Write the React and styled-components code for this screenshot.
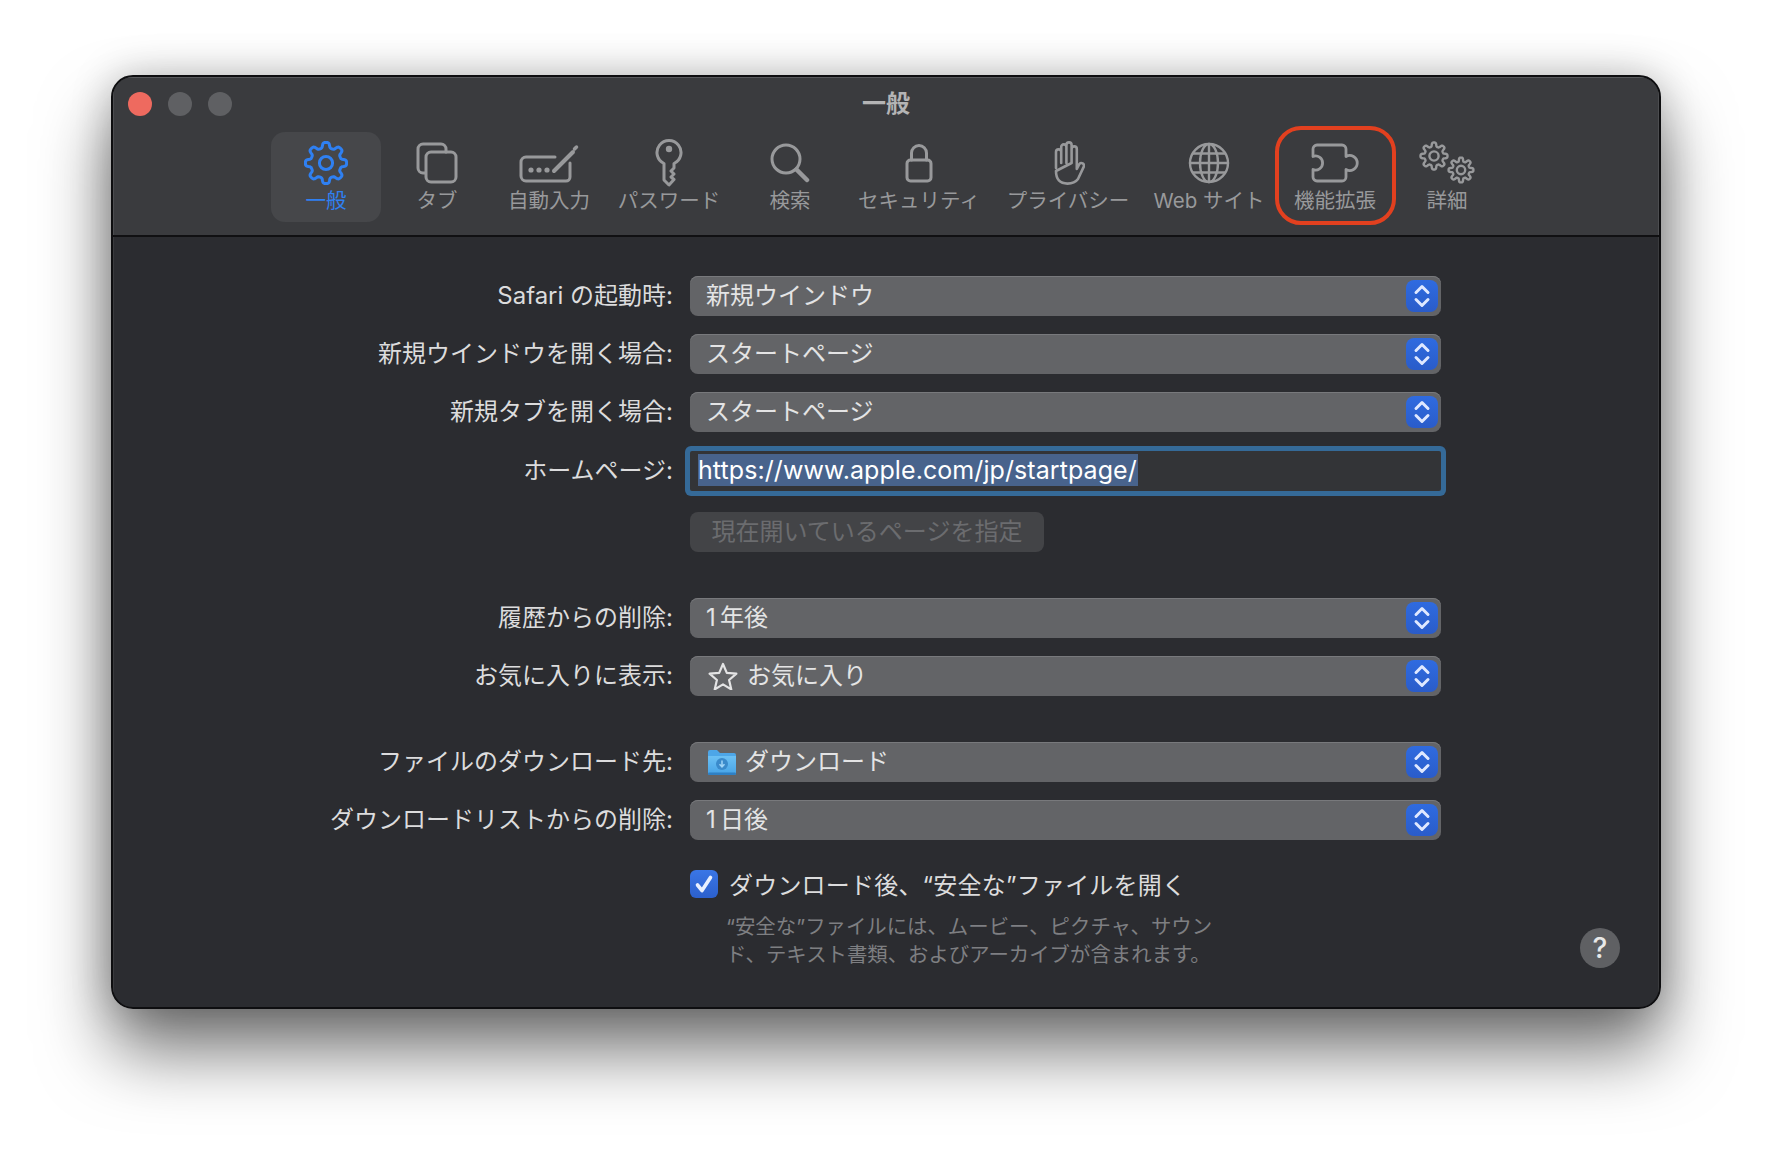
import React from 'react';
import styled, { createGlobalStyle } from 'styled-components';

const GlobalStyle = createGlobalStyle`
	html, body {
		margin: 0;
		padding: 0;
		background: #fff;
	}
	body {
		font-family: Inter, "Noto Sans CJK JP", sans-serif;
	}
`;

const Page = styled.div`
	width: 1772px;
	height: 1156px;
	padding-top: 75px;
	box-sizing: border-box;
	overflow: hidden;
	background: #fff;
`;

const Shadow = styled.div`
	width: 1550px;
	height: 934px;
	margin: 0 auto;
	border-radius: 22px;
	box-shadow: 0 42px 70px rgba(0, 0, 0, 0.55), 0 0 40px rgba(0, 0, 0, 0.22);
`;

const Window = styled.div`
	width: 100%;
	height: 100%;
	box-sizing: border-box;
	display: flex;
	flex-direction: column;
	border: 2px solid #0e0e10;
	border-radius: 22px;
	overflow: hidden;
	background: #2b2c30;
`;

const Toolbar = styled.header`
	height: 160px;
	flex-shrink: 0;
	box-sizing: border-box;
	background: #3a3b3e;
	border-bottom: 2px solid #101012;
	box-shadow: inset 0 1px 0 #58595c, inset 1px 0 0 #4c4d50, inset -1px 0 0 #4c4d50;
`;

const TitleRow = styled.div`
	height: 55px;
	padding: 0 15px;
	display: grid;
	grid-template-columns: 1fr auto 1fr;
	align-items: center;
`;

const Lights = styled.div`
	display: flex;
	gap: 16px;
	padding-bottom: 2px;
`;

const Light = styled.span`
	width: 24px;
	height: 24px;
	border-radius: 50%;
	background: ${({ $color }) => $color};
`;

const Title = styled.div`
	padding-bottom: 7px;
	font-size: 24px;
	font-weight: 700;
	color: #b4b4b5;
`;

const Tabs = styled.nav`
	display: flex;
	padding-left: 158px;
`;

const TabItem = styled.div`
	position: relative;
	width: ${({ $width }) => $width}px;
	height: 90px;
	box-sizing: border-box;
	padding-top: 6px;
	display: flex;
	flex-direction: column;
	align-items: center;
	border-radius: 14px;
	background: ${({ $active }) => ($active ? '#46474a' : 'transparent')};
	color: ${({ $active }) => ($active ? '#2f80f2' : '#98999b')};
`;

const IconSlot = styled.div`
	height: 50px;
	display: flex;
	align-items: center;
	justify-content: center;
`;

const TabLabel = styled.span`
	margin-top: 1px;
	font-size: 20.5px;
	line-height: 24px;
	white-space: nowrap;
`;

const Ring = styled.span`
	position: absolute;
	top: -6px;
	bottom: -3px;
	left: 2px;
	right: 1px;
	border: 4px solid #e2401f;
	border-radius: 26px;
`;

const Body = styled.main`
	flex: 1;
	box-sizing: border-box;
	padding: 39px 0 39px;
	display: flex;
	flex-direction: column;
	box-shadow: inset 0 -1px 0 #424346, inset 1px 0 0 #3a3b3e, inset -1px 0 0 #3a3b3e;
`;

const Row = styled.div`
	display: grid;
	grid-template-columns: 560px 751px;
	column-gap: 17px;
	align-items: center;
	margin-top: ${({ $top }) => $top || 0}px;
`;

const Label = styled.label`
	font-size: 24px;
	line-height: 40px;
	text-align: right;
	color: #dcdcdd;
	white-space: nowrap;
`;

const Select = styled.div`
	height: 40px;
	box-sizing: border-box;
	padding: 0 3px 0 16px;
	display: flex;
	align-items: center;
	gap: 9px;
	border-radius: 8px;
	background: #636467;
	box-shadow: inset 0 1px 0 #78797c;
	font-size: 24px;
	color: #e4e4e5;
`;

const SelectIcon = styled.span`
	display: flex;
	margin-left: 2px;
`;

const SelectText = styled.span`
	flex: 1;
	padding-bottom: 6px;
	white-space: nowrap;
`;

const Stepper = styled.span`
	width: 32px;
	height: 32px;
	display: flex;
	align-items: center;
	justify-content: center;
	border-radius: 8px;
	background: linear-gradient(#2f6be0, #2a5cc9);
`;

const Field = styled.div`
	height: 40px;
	box-sizing: border-box;
	padding: 3px 8px 5px;
	display: flex;
	align-items: center;
	background: #333437;
	box-shadow: 0 0 0 5px #356a98;
	border-radius: 2px;
`;

const Selection = styled.span`
	height: 32px;
	line-height: 33px;
	padding-right: 1px;
	font-size: 25px;
	letter-spacing: 0.08px;
	background: #48638c;
	color: #fff;
	white-space: nowrap;
`;

const GhostButton = styled.div`
	width: 354px;
	height: 40px;
	box-sizing: border-box;
	padding-bottom: 6px;
	display: flex;
	align-items: center;
	justify-content: center;
	border-radius: 8px;
	background: #434447;
	color: #6b6c6f;
	font-size: 24px;
`;

const Footer = styled.div`
	margin-top: 30px;
	display: grid;
	grid-template-columns: 560px 751px 1fr;
	column-gap: 17px;
`;

const CheckRow = styled.div`
	display: flex;
	align-items: center;
	gap: 11px;
	height: 28px;
	font-size: 24px;
	letter-spacing: 0.2px;
	color: #dcdcdd;
	white-space: nowrap;
`;

const CheckText = styled.span`
	padding-bottom: 2px;
`;

const CheckBox = styled.span`
	width: 28px;
	height: 28px;
	display: flex;
	align-items: center;
	justify-content: center;
	border-radius: 6px;
	background: linear-gradient(#3a76e6, #2c60cc);
`;

const Note = styled.p`
	width: 500px;
	margin: 15px 0 0 36px;
	font-size: 20.4px;
	line-height: 28px;
	color: #7e7f82;
`;

const Help = styled.div`
	grid-column: 3;
	align-self: end;
	justify-self: end;
	margin: 0 39px 1px 0;
	width: 40px;
	height: 40px;
	display: flex;
	align-items: center;
	justify-content: center;
	border-radius: 50%;
	background: #5f6063;
	color: #e8e8e8;
	font-size: 28px;
	font-weight: 500;
`;

// toolbar icons, 1 unit = 1px, measured off the reference
const Icon = ({ w, h, children, sw = 3 }) => (
	<svg width={w} height={h} viewBox={`0 0 ${w} ${h}`} fill="none" stroke="currentColor" strokeWidth={sw} strokeLinecap="round" strokeLinejoin="round">
		{children}
	</svg>
);

const gearPath = (cx, cy, r, a, teeth = 8) => {
	const pts = [];
	for (let i = 0; i < 160; i++) {
		const t = (i / 160) * Math.PI * 2;
		const wave = Math.tanh(Math.cos(teeth * t) * 2.2) / Math.tanh(2.2);
		const rad = r + a * wave;
		pts.push(`${(cx + rad * Math.sin(t)).toFixed(2)} ${(cy - rad * Math.cos(t)).toFixed(2)}`);
	}
	return `M${pts.join('L')}Z`;
};

const GearIcon = () => (
	<Icon w={44} h={44}>
		<path d={gearPath(22, 22, 18, 2.6)} />
		<circle cx="22" cy="22" r="6.6" />
	</Icon>
);

const TabsIcon = () => (
	<Icon w={42} h={42}>
		<path d="M9 31H7a5 5 0 0 1-5-5V7a5 5 0 0 1 5-5h18a5 5 0 0 1 5 5v3" />
		<rect x="10" y="10" width="30" height="30" rx="5" />
	</Icon>
);

const AutofillIcon = () => (
	<Icon w={60} h={40}>
		<path d="M36 14H7a5 5 0 0 0-5 5v14a5 5 0 0 0 5 5h40a4 4 0 0 0 4-4V20" />
		<path d="M35 28l19-19" strokeWidth="4" />
		<path d="M55.500 6l2-2" strokeWidth="3.500" />
		<g fill="currentColor" stroke="none">
			<circle cx="12" cy="27" r="2.6" />
			<circle cx="20" cy="27" r="2.6" />
			<circle cx="28" cy="27" r="2.6" />
		</g>
	</Icon>
);

const KeyIcon = () => (
	<Icon w={28} h={50}>
		<path d="M9 25.5A12 12 0 1 1 19 25.5V30l-3 3 3 3-3 3 3 2.5L14 47l-5-5z" />
		<circle cx="14" cy="11" r="3.2" fill="currentColor" stroke="none" />
	</Icon>
);

const SearchIcon = () => (
	<Icon w={40} h={40}>
		<circle cx="16" cy="16" r="14" />
		<path d="M26.5 26.5L37 37" strokeWidth="4.5" />
	</Icon>
);

const LockIcon = () => (
	<Icon w={28} h={40}>
		<rect x="2" y="17" width="24" height="21" rx="3.5" />
		<path d="M6.5 17V10a7.5 7.5 0 0 1 15 0v7" />
	</Icon>
);

const HandIcon = () => (
	<Icon w={34} h={44} sw={2.6}>
		<path d="M5 27V11a2.6 2.6 0 0 1 5.2 0v11M10.2 22V6a2.6 2.6 0 0 1 5.2 0v16M15.4 22V4a2.6 2.6 0 0 1 5.2 0v18M20.6 22V8a2.6 2.6 0 0 1 5.2 0v20l2.6-5a2.6 2.6 0 0 1 4.4 2.6L27 38q-3.4 4.6-10.5 4.6Q5 42.600 5 30z" />
	</Icon>
);

const GlobeIcon = () => (
	<Icon w={42} h={42} sw={2.4}>
		<circle cx="21" cy="21" r="19" />
		<ellipse cx="21" cy="21" rx="9" ry="19" />
		<path d="M21 2v38M2 21h38M5 11.500h32M5 30.500h32" />
	</Icon>
);

const PuzzleIcon = () => (
	<Icon w={48} h={40} sw={2.8}>
		<path d="M6 2H31a4 4 0 0 1 4 4V13.500A7.500 7.500 0 1 1 35 26.500V34a4 4 0 0 1-4 4H6a4 4 0 0 1-4-4V26.500A7 7 0 1 0 2 13.500V6a4 4 0 0 1 4-4z" />
	</Icon>
);

const GearsIcon = () => (
	<Icon w={56} h={44} sw={2.4}>
		<path d={gearPath(15, 15, 11.5, 2)} />
		<circle cx="15" cy="15" r="4.6" />
		<path d={gearPath(42, 29, 10.500, 1.9)} />
		<circle cx="42" cy="29" r="4.2" />
	</Icon>
);

const Chevrons = () => (
	<svg width="18" height="26" viewBox="0 0 18 26" fill="none" stroke="#dfe8ff" strokeWidth="3" strokeLinecap="round" strokeLinejoin="round">
		<path d="M3 9.500L9 3.500l6 6M3 16.500l6 6 6-6" />
	</svg>
);

const StarIcon = () => (
	<svg width="30" height="28" viewBox="0 0 30 28" fill="none" stroke="#e4e4e5" strokeWidth="2.2" strokeLinejoin="round">
		<path d="M15 2l3.800 8.900 9.600.800-7.300 6.300 2.200 9.400L15 22.400 6.700 27.400l2.200-9.400-7.300-6.300 9.600-.800z" />
	</svg>
);

const FolderIcon = () => (
	<svg width="28" height="26" viewBox="0 0 28 26">
		<defs>
			<linearGradient id="folderBody" x1="0" y1="0" x2="0" y2="1">
				<stop offset="0" stopColor="#6cc0f4" />
				<stop offset="1" stopColor="#46a3e6" />
			</linearGradient>
		</defs>
		<path d="M0 3a2 2 0 0 1 2-2h7l3 3h14a2 2 0 0 1 2 2v4H0z" fill="#4da6e8" />
		<path d="M0 7h28v17a2 2 0 0 1-2 2H2a2 2 0 0 1-2-2z" fill="url(#folderBody)" />
		<rect y="23.500" width="28" height="2.500" rx="1.200" fill="#2f80c4" />
		<circle cx="14" cy="15" r="6" fill="#3a8acb" />
		<path d="M14 11.500v6M11.500 15.200L14 17.800l2.500-2.600" fill="none" stroke="#9fd4f7" strokeWidth="1.500" />
	</svg>
);

const CheckMark = () => (
	<svg width="20" height="20" viewBox="0 0 20 20" fill="none" stroke="#e8f0ff" strokeWidth="3.600" strokeLinecap="round" strokeLinejoin="round">
		<path d="M3.500 11l4.500 5.500L16.500 3.500" />
	</svg>
);

const tabs = [
	{ label: '一般', width: 110, icon: <GearIcon />, active: true },
	{ label: 'タブ', width: 112, icon: <TabsIcon /> },
	{ label: '自動入力', width: 112, icon: <AutofillIcon /> },
	{ label: 'パスワード', width: 128, icon: <KeyIcon /> },
	{ label: '検索', width: 114, icon: <SearchIcon /> },
	{ label: 'セキュリティ', width: 144, icon: <LockIcon /> },
	{ label: 'プライバシー', width: 154, icon: <HandIcon /> },
	{ label: 'Web サイト', width: 128, icon: <GlobeIcon /> },
	{ label: '機能拡張', width: 124, icon: <PuzzleIcon />, ring: true },
	{ label: '詳細', width: 100, icon: <GearsIcon /> },
];

const SelectRow = ({ label, value, icon, top }) => (
	<Row $top={top}>
		<Label>{label}</Label>
		<Select>
			{icon && <SelectIcon>{icon}</SelectIcon>}
			<SelectText>{value}</SelectText>
			<Stepper><Chevrons /></Stepper>
		</Select>
	</Row>
);

function App() {
	return (
		<>
			<GlobalStyle />
			<Page>
				<Shadow>
					<Window>
						<Toolbar>
							<TitleRow>
								<Lights>
									<Light $color="#ee6a5f" />
									<Light $color="#5f6063" />
									<Light $color="#5f6063" />
								</Lights>
								<Title>一般</Title>
							</TitleRow>
							<Tabs>
								{tabs.map(({ label, width, icon, active, ring }) => (
									<TabItem key={label} $width={width} $active={active}>
										<IconSlot>{icon}</IconSlot>
										<TabLabel>{label}</TabLabel>
										{ring && <Ring />}
									</TabItem>
								))}
							</Tabs>
						</Toolbar>
						<Body>
							<SelectRow label="Safari の起動時:" value="新規ウインドウ" />
							<SelectRow label="新規ウインドウを開く場合:" value="スタートページ" top={18} />
							<SelectRow label="新規タブを開く場合:" value="スタートページ" top={18} />
							<Row $top={19}>
								<Label>ホームページ:</Label>
								<Field>
									<Selection>https://www.apple.com/jp/startpage/</Selection>
								</Field>
							</Row>
							<Row $top={21}>
								<span />
								<GhostButton>現在開いているページを指定</GhostButton>
							</Row>
							<SelectRow label="履歴からの削除:" value={'1\u2009年後'} top={46} />
							<SelectRow label="お気に入りに表示:" value="お気に入り" icon={<StarIcon />} top={18} />
							<SelectRow label="ファイルのダウンロード先:" value="ダウンロード" icon={<FolderIcon />} top={46} />
							<SelectRow label="ダウンロードリストからの削除:" value={'1\u2009日後'} top={18} />
							<Footer>
								<span />
								<div>
									<CheckRow>
										<CheckBox><CheckMark /></CheckBox>
										<CheckText>ダウンロード後、“安全な”ファイルを開く</CheckText>
									</CheckRow>
									<Note>“安全な”ファイルには、ムービー、ピクチャ、サウンド、テキスト書類、およびアーカイブが含まれます。</Note>
								</div>
								<Help>?</Help>
							</Footer>
						</Body>
					</Window>
				</Shadow>
			</Page>
		</>
	);
}

export default App;
